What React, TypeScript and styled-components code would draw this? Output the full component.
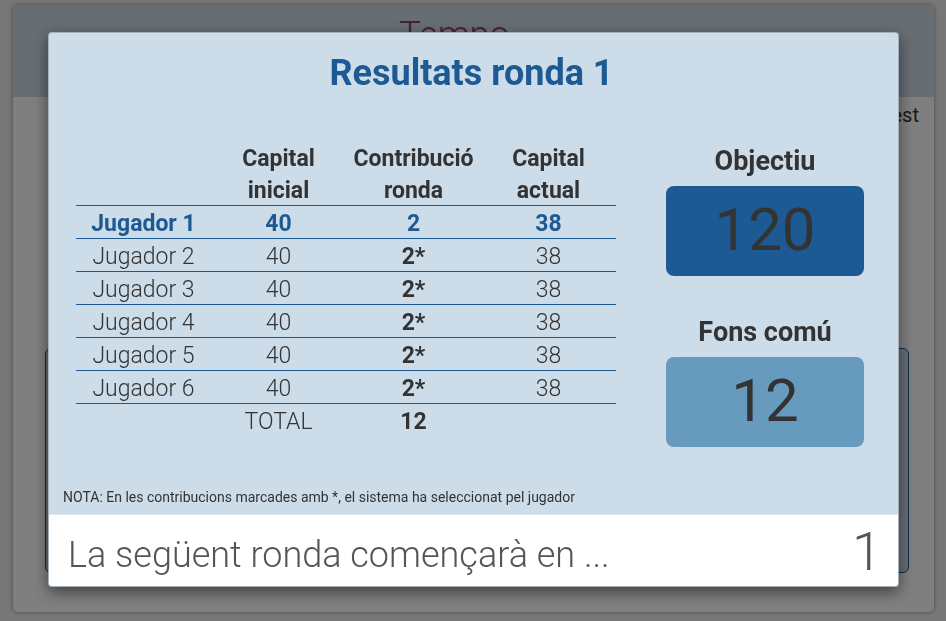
import React from "react";
import styled, { createGlobalStyle } from "styled-components";

const blue = "#1d5a94";
const paleBlue = "#ccdce8";

const GlobalStyle = createGlobalStyle`
  *, *::before, *::after { box-sizing: border-box; }
  body {
    margin: 0;
    background: #eeeeee;
    color: #333333;
    font-family: Roboto, "Liberation Sans", sans-serif;
    font-weight: 300;
  }
  h1, h2, p { margin: 0; }
`;

const Page = styled.main`
  display: flex;
  min-height: 100vh;
  padding: 5px 12px 9px 13px;
`;

const GameCard = styled.section`
  display: flex;
  flex: 1;
  flex-direction: column;
  overflow: hidden;
  border-radius: 5px;
  background: #ffffff;
  box-shadow: 0 0 4px rgba(0, 0, 0, 0.4);
`;

const GameHeader = styled.header`
  height: 92px;
  padding-top: 6px;
  background: ${paleBlue};
  color: #943c68;
  font-size: 36px;
  line-height: 48px;
  text-align: center;
  padding-right: 38px;
`;

const GameStatus = styled.p`
  padding: 6px 15px;
  font-size: 20px;
  font-weight: 400;
  line-height: 24px;
  text-align: right;
`;

const GamePanel = styled.div`
  flex: 1;
  margin: 215px 25px 39px 32px;
  border: 1px solid ${blue};
  border-radius: 6px;
  background: ${paleBlue};
`;

const Backdrop = styled.div`
  position: fixed;
  inset: 0;
  overflow: auto;
  padding: 32px 47px 32px 48px;
  background: rgba(0, 0, 0, 0.5);
`;

const Dialog = styled.section`
  overflow: hidden;
  border: 1px solid rgba(0, 0, 0, 0.2);
  border-radius: 4px;
  background: ${paleBlue};
  box-shadow: 0 5px 15px rgba(0, 0, 0, 0.5);
`;

const DialogTitle = styled.h1`
  padding: 16px 4px 0 0;
  color: ${blue};
  font-size: 36px;
  font-weight: 700;
  line-height: 48px;
  text-align: center;
`;

const Results = styled.div`
  display: grid;
  grid-template-columns: minmax(0, 540fr) minmax(0, 198fr);
  gap: 50px;
  padding: 44px 34px 0 27px;
`;

const ScoreTable = styled.table`
  width: 100%;
  align-self: start;
  border-collapse: collapse;
  table-layout: fixed;
  font-size: 23px;
  line-height: 28px;
  text-align: center;

  th, td { padding: 4px 0 0; }
  thead th { padding: 0; }
`;

const HeadCell = styled.th`
  font-weight: 700;
`;

const HeadLine = styled.span`
  display: block;
  padding-top: 4px;
`;

const PlayerRow = styled.tr<{ $current?: boolean }>`
  border-top: 1px solid ${blue};
  color: ${(p) => (p.$current ? blue : "inherit")};
  font-weight: ${(p) => (p.$current ? 700 : 300)};
`;

const PlayerName = styled.th`
  font-weight: inherit;
`;

const Contribution = styled.td`
  font-weight: 700;
`;

const Totals = styled.aside`
  display: flex;
  flex-direction: column;
  gap: 39px;
  padding-top: 3px;
`;

const TotalLabel = styled.h2`
  padding-bottom: 8px;
  font-size: 27px;
  font-weight: 700;
  line-height: 34px;
  text-align: center;
`;

const TotalBox = styled.p<{ $tone: string }>`
  height: 90px;
  border-radius: 8px;
  background: ${(p) => p.$tone};
  font-size: 60px;
  font-weight: 400;
  line-height: 88px;
  text-align: center;
`;

const Note = styled.p`
  padding: 40px 14px 7px;
  font-size: 14px;
  font-weight: 400;
  line-height: 20px;
`;

const DialogFooter = styled.footer`
  display: flex;
  align-items: center;
  justify-content: space-between;
  height: 72px;
  padding: 0 16px 0 19px;
  border-top: 1px solid #e5e5e5;
  background: #ffffff;
  color: #555555;
`;

const NextRound = styled.p`
  padding-top: 8px;
  font-size: 36px;
  line-height: 48px;
`;

const Countdown = styled.span`
  padding-top: 2px;
  font-size: 54px;
  line-height: 64px;
`;

const columns = [
  ["Capital", "inicial"],
  ["Contribució", "ronda"],
  ["Capital", "actual"],
];

const players = [1, 2, 3, 4, 5, 6].map((id) => ({
  id,
  initial: 40,
  contribution: id === 1 ? "2" : "2*",
  current: 38,
}));

export default function App() {
  return (
    <>
      <GlobalStyle />
      <Page>
        <GameCard>
          <GameHeader>Tempo</GameHeader>
          <GameStatus>est</GameStatus>
          <GamePanel />
        </GameCard>
      </Page>
      <Backdrop>
        <Dialog role="dialog" aria-modal="true" aria-labelledby="results-title">
          <DialogTitle id="results-title">Resultats ronda 1</DialogTitle>
          <Results>
            <ScoreTable>
              <thead>
                <tr>
                  <td />
                  {columns.map(([first, second]) => (
                    <HeadCell key={second} scope="col">
                      <HeadLine>{first}</HeadLine>
                      <HeadLine>{second}</HeadLine>
                    </HeadCell>
                  ))}
                </tr>
              </thead>
              <tbody>
                {players.map((player) => (
                  <PlayerRow key={player.id} $current={player.id === 1}>
                    <PlayerName scope="row">Jugador {player.id}</PlayerName>
                    <td>{player.initial}</td>
                    <Contribution>{player.contribution}</Contribution>
                    <td>{player.current}</td>
                  </PlayerRow>
                ))}
              </tbody>
              <tfoot>
                <PlayerRow>
                  <td />
                  <PlayerName scope="row">TOTAL</PlayerName>
                  <Contribution>12</Contribution>
                  <td />
                </PlayerRow>
              </tfoot>
            </ScoreTable>
            <Totals>
              <div>
                <TotalLabel>Objectiu</TotalLabel>
                <TotalBox $tone={blue}>120</TotalBox>
              </div>
              <div>
                <TotalLabel>Fons comú</TotalLabel>
                <TotalBox $tone="#669bbe">12</TotalBox>
              </div>
            </Totals>
          </Results>
          <Note>
            NOTA: En les contribucions marcades amb *, el sistema ha seleccionat pel jugador
          </Note>
          <DialogFooter>
            <NextRound>La següent ronda començarà en ...</NextRound>
            <Countdown role="timer">1</Countdown>
          </DialogFooter>
        </Dialog>
      </Backdrop>
    </>
  );
}
